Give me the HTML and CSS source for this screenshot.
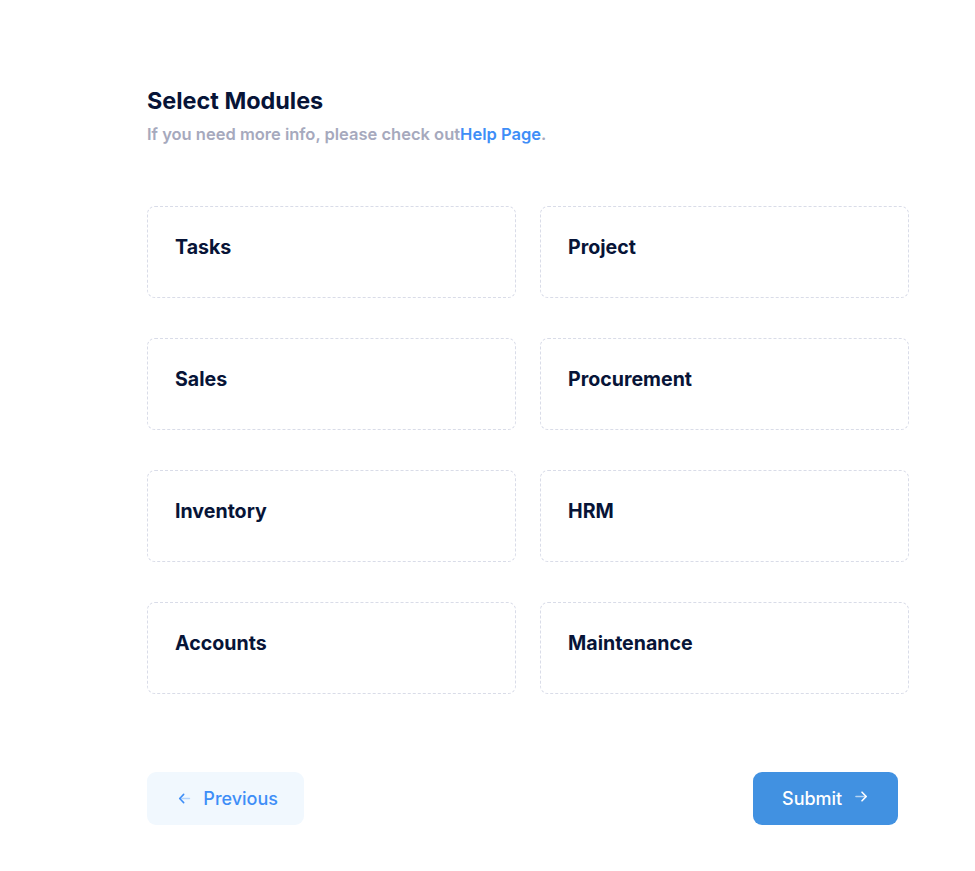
FILE: index.html
```html
<!DOCTYPE html>
<html lang="en">
<head>
<meta charset="utf-8">
<title>Select Modules</title>
<link rel="stylesheet" href="styles.css">
</head>
<body>
<div class="page">
  <div class="heading">
    <h2 class="title">Select Modules</h2>
    <p class="subtitle">If you need more info, please check out<a class="link" href="#">Help Page</a>.</p>
  </div>
  <div class="grid">
    <div class="card"><span class="card-label">Tasks</span></div>
    <div class="card"><span class="card-label">Project</span></div>
    <div class="card"><span class="card-label">Sales</span></div>
    <div class="card"><span class="card-label">Procurement</span></div>
    <div class="card"><span class="card-label">Inventory</span></div>
    <div class="card"><span class="card-label">HRM</span></div>
    <div class="card"><span class="card-label">Accounts</span></div>
    <div class="card"><span class="card-label">Maintenance</span></div>
  </div>
  <div class="actions">
    <button class="btn btn-light" type="button">
      <svg class="icon" width="15" height="15" viewBox="0 0 15 15" fill="none"><path d="M13 7.5H3" stroke="#b3d3fb" stroke-width="1.6" stroke-linecap="round"/><path d="M7 3.2L2.8 7.5L7 11.8" stroke="currentColor" stroke-width="1.6" stroke-linecap="round" stroke-linejoin="round"/></svg>
      <span>Previous</span>
    </button>
    <button class="btn btn-primary" type="button">
      <span>Submit</span>
      <svg class="icon icon-up" width="15" height="15" viewBox="0 0 15 15" fill="none"><path d="M2 7.5H12" stroke="#b5d4f3" stroke-width="1.6" stroke-linecap="round"/><path d="M8 3.2L12.2 7.5L8 11.8" stroke="currentColor" stroke-width="1.6" stroke-linecap="round" stroke-linejoin="round"/></svg>
    </button>
  </div>
</div>
</body>
</html>
```
FILE: styles.css
```css
* { box-sizing: border-box; }
html, body { margin: 0; padding: 0; background: #ffffff; }
body { font-family: Inter, "Noto Sans", sans-serif; color: #071437; }
.page { padding: 87px 66px 0 147px; }
.heading { margin-bottom: 62px; }
.title { margin: 0; font-size: 23.4px; font-weight: 700; line-height: 28px; color: #071437; }
.subtitle { margin: 9px 0 0; font-size: 16.5px; font-weight: 600; line-height: 20px; color: #a6a9bd; }
.link { color: #3e8ef7; text-decoration: none; }
.grid { display: grid; grid-template-columns: 1fr 1fr; column-gap: 24px; row-gap: 40px; }
.card { border: 1px dashed #d9dce8; border-radius: 8px; padding: 26px 27px 36px; height: 92px; }
.card-label { display: block; font-size: 19.6px; font-weight: 700; line-height: 28px; color: #071437; }
.actions { display: flex; justify-content: space-between; margin-top: 78px; margin-right: 11px; }
.btn { display: inline-flex; align-items: center; gap: 12px; height: 53px; border: 0; border-radius: 9px; font-family: Inter, "Noto Sans", sans-serif; font-size: 18px; font-weight: 500; cursor: pointer; }
.btn-light { background: #f1f8fe; color: #3e8ef7; padding: 0 26px 0 30px; width: 157px; }
.btn-primary { background: #4191e1; color: #ffffff; padding: 0 28px 0 29px; width: 145px; }
.icon { display: block; }
.icon-up { margin-top: -4px; }
```
